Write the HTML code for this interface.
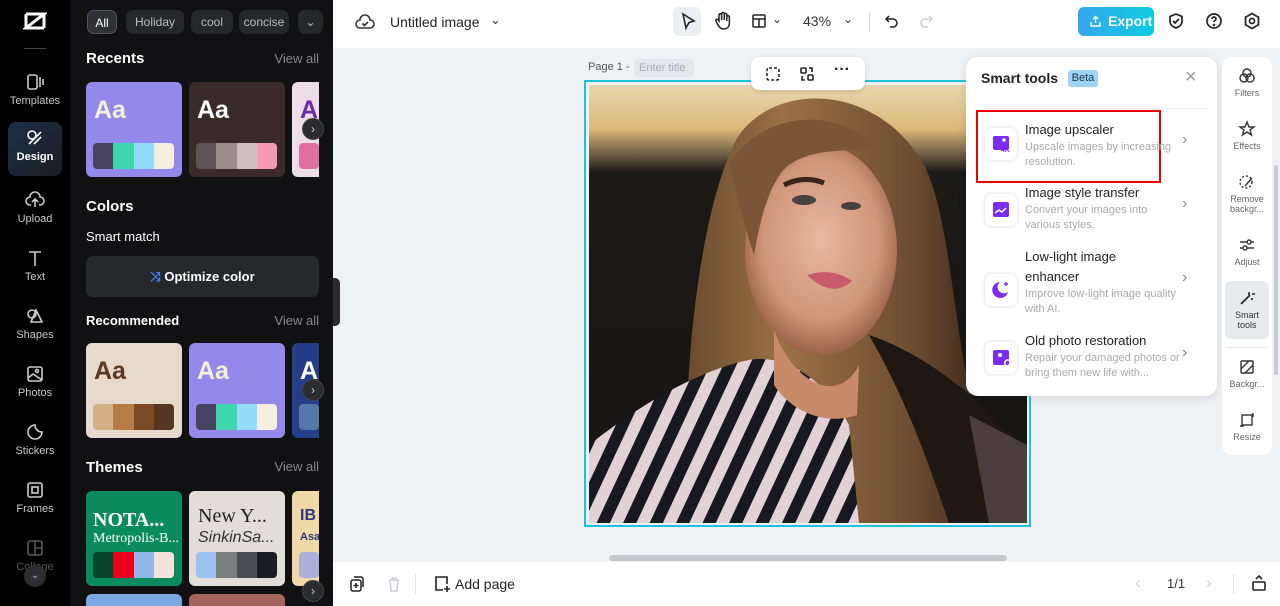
<!DOCTYPE html>
<html><head><meta charset="utf-8"><style>
*{box-sizing:border-box;margin:0;padding:0}
body{width:1280px;height:606px;overflow:hidden;font-family:"Liberation Sans",sans-serif;background:#eff2f5;position:relative}
.abs{position:absolute}
.rail{left:0;top:0;width:70px;height:606px;background:#000}
.rail .it{position:absolute;left:8px;width:54px;height:54px;text-align:center;color:#c8c8c8;font-size:11px}
.rail .it svg{display:block;margin:6px auto 3px}
.panel{left:70px;top:0;width:263px;height:606px;background:#111113;color:#fff;overflow:hidden}
.chip{position:absolute;top:10px;height:24px;border-radius:7px;background:#26272b;color:#bbb;font-size:12px;line-height:24px;text-align:center}
.h{position:absolute;left:16px;font-weight:bold;font-size:15px}
.va{position:absolute;right:14px;color:#888;font-size:13px}
.card{position:absolute;width:96px;height:95px;border-radius:6px;overflow:hidden}
.card .aa{position:absolute;left:8px;top:14px;font-size:25px;font-weight:bold}
.pal{position:absolute;left:7px;bottom:8px;width:81px;height:26px;border-radius:4px;overflow:hidden;display:flex}
.pal i{flex:1}
.nav{position:absolute;width:22px;height:22px;border-radius:50%;background:#2b2c30;border:1px solid #444;color:#ccc;font-size:12px;line-height:20px;text-align:center}
.top{left:333px;top:0;width:947px;height:48px;background:#fff}
.bot{left:333px;top:562px;width:947px;height:44px;background:#fff}
.st{left:966px;top:57px;width:251px;height:339px;background:#fff;border-radius:12px;box-shadow:0 2px 10px rgba(0,0,0,.12)}
.tool{position:absolute;left:18px;width:200px}
.tool .ic{position:absolute;left:1px;top:0;width:32px;height:32px;border-radius:7px;background:#fff;box-shadow:0 0 4px rgba(0,0,0,.15)}
.tool b{position:absolute;left:41px;font-weight:normal;font-size:13px;color:#222;line-height:20px;width:160px}
.tool span{position:absolute;left:41px;font-size:11px;color:#aaa;line-height:15px;width:160px}
.chev{position:absolute;left:216px;color:#888;font-size:16px}
.rr{left:1222px;top:57px;width:50px;height:398px;background:#fff;border-radius:10px}
.rr .it{position:absolute;left:3px;width:44px;text-align:center;font-size:9px;color:#666;line-height:10px}
.rr .it svg{display:block;margin:0 auto 3px}
</style></head><body>

<div class="abs rail">
 <svg class="abs" style="left:23px;top:11px" width="24" height="20" viewBox="0 0 24 20"><path d="M3 3h18L3 17h18" fill="none" stroke="#fff" stroke-width="3"/><path d="M3 3v14M21 3v14" stroke="#fff" stroke-width="3"/></svg>
 <div class="abs" style="left:24px;top:48px;width:22px;height:1px;background:#444"></div>
 <div class="it" style="top:66px"><svg width="20" height="20" viewBox="0 0 20 20" fill="none" stroke="#ccc" stroke-width="1.6"><rect x="3" y="3" width="9" height="14" rx="2"/><path d="M15 5v10M18 7v6"/></svg>Templates</div>
 <div class="it" style="top:122px;height:54px;background:linear-gradient(135deg,#1b3046,#1b1d22);border-radius:8px;color:#fff;font-weight:bold"><svg width="20" height="20" viewBox="0 0 20 20" fill="none" stroke="#fff" stroke-width="1.6"><circle cx="7" cy="7" r="4"/><path d="M4 16l12-12M9 16l7-7"/></svg>Design</div>
 <div class="it" style="top:184px"><svg width="20" height="20" viewBox="0 0 20 20" fill="none" stroke="#ccc" stroke-width="1.6"><path d="M6 15H5a4 4 0 010-8 5 5 0 0110 0 4 4 0 010 8h-1M10 9v8M7 12l3-3 3 3"/></svg>Upload</div>
 <div class="it" style="top:242px"><svg width="20" height="20" viewBox="0 0 20 20" fill="none" stroke="#ccc" stroke-width="1.6"><path d="M4 4h12M10 4v14"/></svg>Text</div>
 <div class="it" style="top:300px"><svg width="20" height="20" viewBox="0 0 20 20" fill="none" stroke="#ccc" stroke-width="1.6"><circle cx="7" cy="8" r="4"/><path d="M11 4l6 12H6z"/></svg>Shapes</div>
 <div class="it" style="top:358px"><svg width="20" height="20" viewBox="0 0 20 20" fill="none" stroke="#ccc" stroke-width="1.6"><rect x="3" y="3" width="14" height="14" rx="2"/><path d="M3 14l5-4 9 6"/><circle cx="12" cy="7" r="1.5"/></svg>Photos</div>
 <div class="it" style="top:416px"><svg width="20" height="20" viewBox="0 0 20 20" fill="none" stroke="#ccc" stroke-width="1.6"><path d="M10 3a7 7 0 107 7c-4 0-7-3-7-7z"/></svg>Stickers</div>
 <div class="it" style="top:474px"><svg width="20" height="20" viewBox="0 0 20 20" fill="none" stroke="#ccc" stroke-width="1.6"><rect x="3" y="3" width="14" height="14" rx="2"/><rect x="7" y="7" width="6" height="6"/></svg>Frames</div>
 <div class="it" style="top:532px;color:#555"><svg width="20" height="20" viewBox="0 0 20 20" fill="none" stroke="#555" stroke-width="1.6"><rect x="3" y="3" width="14" height="14" rx="2"/><path d="M10 3v14M10 10h7"/></svg>Collage</div>
 <div class="abs" style="left:24px;top:565px;width:22px;height:22px;border-radius:50%;background:#2d2e32;color:#bbb;font-size:10px;text-align:center;line-height:22px">⌄</div>
</div>

<div class="abs panel">
 <div class="chip" style="left:17px;width:30px;background:#303136;color:#fff;border:1px solid #555">All</div>
 <div class="chip" style="left:56px;width:58px">Holiday</div>
 <div class="chip" style="left:121px;width:42px">cool</div>
 <div class="chip" style="left:169px;width:50px;overflow:hidden">concise</div>
 <div class="chip" style="left:228px;width:25px">⌄</div>
 <div class="h" style="top:50px">Recents</div><div class="va" style="top:51px">View all</div>
 <div class="card" style="left:16px;top:82px;background:#9488ea"><div class="aa" style="color:#f4efd9">Aa</div><div class="pal"><i style="background:#48435f"></i><i style="background:#3fd6ae"></i><i style="background:#95dcfb"></i><i style="background:#f4f0dd"></i></div></div>
 <div class="card" style="left:119px;top:82px;background:#3a2a2a"><div class="aa" style="color:#fff">Aa</div><div class="pal"><i style="background:#5f5355"></i><i style="background:#9a8c8c"></i><i style="background:#cdbfbf"></i><i style="background:#f49bb3"></i></div></div>
 <div class="card" style="left:222px;top:82px;width:27px;border-radius:6px 0 0 6px;background:#ecdde6"><div class="aa" style="color:#6a2ca8">A</div><div class="pal" style="width:20px"><i style="background:#e070a0"></i></div></div>
 <div class="nav" style="left:232px;top:118px">›</div>
 <div class="h" style="top:198px">Colors</div>
 <div class="abs" style="left:16px;top:229px;font-size:13px">Smart match</div>
 <div class="abs" style="left:16px;top:256px;width:233px;height:41px;border-radius:7px;background:#27282c;text-align:center;line-height:41px;font-weight:bold;font-size:13px"><span style="color:#4a7cf5">⤨</span> Optimize color</div>
 <div class="abs" style="left:16px;top:313px;font-weight:bold;font-size:13px">Recommended</div><div class="va" style="top:313px">View all</div>
 <div class="card" style="left:16px;top:343px;background:#e6dacd"><div class="aa" style="color:#5a3920">Aa</div><div class="pal"><i style="background:#d6b188"></i><i style="background:#b57c47"></i><i style="background:#7b4923"></i><i style="background:#553620"></i></div></div>
 <div class="card" style="left:119px;top:343px;background:#9488ea"><div class="aa" style="color:#f4efd9">Aa</div><div class="pal"><i style="background:#48435f"></i><i style="background:#3fd6ae"></i><i style="background:#95dcfb"></i><i style="background:#f4f0dd"></i></div></div>
 <div class="card" style="left:222px;top:343px;width:27px;border-radius:6px 0 0 6px;background:#243e8a"><div class="aa" style="color:#fff">A</div><div class="pal" style="width:20px"><i style="background:#5577aa"></i></div></div>
 <div class="nav" style="left:232px;top:379px">›</div>
 <div class="h" style="top:459px">Themes</div><div class="va" style="top:459px">View all</div>
 <div class="card" style="left:16px;top:491px;background:#0a8b5e"><div class="abs" style="left:7px;top:18px;font-family:'Liberation Serif',serif;font-weight:bold;font-size:20px;color:#fff">NOTA...</div><div class="abs" style="left:7px;top:40px;font-family:'Liberation Serif',serif;font-size:14px;color:#fff">Metropolis-B...</div><div class="pal"><i style="background:#06442a"></i><i style="background:#e8001c"></i><i style="background:#91b6ea"></i><i style="background:#f4e4da"></i></div></div>
 <div class="card" style="left:119px;top:491px;background:#e2ddd7"><div class="abs" style="left:9px;top:14px;font-family:'Liberation Serif',serif;font-size:20px;color:#222">New Y...</div><div class="abs" style="left:9px;top:38px;font-style:italic;font-size:16px;color:#333">SinkinSa...</div><div class="pal"><i style="background:#9cc3ef"></i><i style="background:#7b7e80"></i><i style="background:#4a4d52"></i><i style="background:#1a1d22"></i></div></div>
 <div class="card" style="left:222px;top:491px;width:27px;border-radius:6px 0 0 6px;background:#efd9a8"><div class="abs" style="left:8px;top:16px;font-weight:bold;font-size:16px;color:#2c3a7a">IB</div><div class="abs" style="left:8px;top:40px;font-weight:bold;font-size:11px;color:#2c3a7a">Asa</div><div class="pal" style="width:20px"><i style="background:#aab0d8"></i></div></div>
 <div class="nav" style="left:232px;top:580px">›</div>
 <div class="card" style="left:16px;top:594px;background:#7ba7df;height:20px"></div>
 <div class="card" style="left:119px;top:594px;background:#a46560;height:20px"></div>
</div>
<div class="abs" style="left:333px;top:278px;width:7px;height:48px;background:#2a2a2e;border-radius:0 5px 5px 0"></div>

<div class="abs top">
 <svg class="abs" style="left:22px;top:12px" width="20" height="20" viewBox="0 0 20 20" fill="none" stroke="#333" stroke-width="1.6"><path d="M6 16H5a4 4 0 010-8 5 5 0 0110 0 4 4 0 010 8H6z"/><path d="M7.5 11.5l2 2 3.5-3.5"/></svg>
 <div class="abs" style="left:57px;top:14px;font-size:14px;color:#222">Untitled image</div>
 <div class="abs" style="left:157px;top:12px;font-size:13px;color:#333">⌄</div>
 <div class="abs" style="left:340px;top:7px;width:28px;height:29px;border-radius:6px;background:#eceef2"></div>
 <svg class="abs" style="left:346px;top:12px" width="18" height="18" viewBox="0 0 18 18" fill="none" stroke="#222" stroke-width="1.6"><path d="M4 2l11 7-5 1.5L7 16z"/></svg>
 <svg class="abs" style="left:381px;top:11px" width="18" height="20" viewBox="0 0 18 20" fill="none" stroke="#222" stroke-width="1.5"><path d="M5 10V4a1.3 1.3 0 012.6 0v5V2.8a1.3 1.3 0 012.6 0V9V3.8a1.3 1.3 0 012.6 0V10V6a1.3 1.3 0 012.6 0v6c0 4-2.5 6-6 6-3 0-4.5-2-6-5l-1.5-3a1.3 1.3 0 012.2-1.3z"/></svg>
 <svg class="abs" style="left:418px;top:13px" width="16" height="16" viewBox="0 0 16 16" fill="none" stroke="#222" stroke-width="1.5"><rect x="2" y="2" width="12" height="12" rx="1"/><path d="M2 6h12M8 6v8"/></svg>
 <div class="abs" style="left:439px;top:12px;font-size:12px;color:#333">⌄</div>
 <div class="abs" style="left:470px;top:13px;font-size:14px;color:#333">43%</div>
 <div class="abs" style="left:510px;top:12px;font-size:12px;color:#333">⌄</div>
 <div class="abs" style="left:536px;top:12px;width:1px;height:20px;background:#ddd"></div>
 <svg class="abs" style="left:551px;top:13px" width="16" height="16" viewBox="0 0 16 16" fill="none" stroke="#222" stroke-width="1.5"><path d="M5 3L2 6l3 3M2 6h7a4 4 0 010 8H6"/></svg>
 <svg class="abs" style="left:585px;top:13px" width="16" height="16" viewBox="0 0 16 16" fill="none" stroke="#ccd" stroke-width="1.5"><path d="M11 3l3 3-3 3M14 6H7a4 4 0 000 8h3"/></svg>
 <div class="abs" style="left:745px;top:7px;width:76px;height:29px;border-radius:6px;background:linear-gradient(90deg,#37a5f0,#0ccde0);color:#fff;font-weight:bold;font-size:14px;line-height:29px;padding-left:30px">Export</div>
 <svg class="abs" style="left:756px;top:15px" width="13" height="13" viewBox="0 0 13 13" fill="none" stroke="#fff" stroke-width="1.4"><path d="M6.5 8V1.5M4 4l2.5-2.5L9 4M2 7v4h9V7"/></svg>
 <svg class="abs" style="left:834px;top:12px" width="18" height="18" viewBox="0 0 18 18" fill="none" stroke="#222" stroke-width="1.7"><path d="M9 2l6 2.5v4.5c0 3.5-2.5 6-6 7-3.5-1-6-3.5-6-7V4.5z"/><path d="M6 9l2 2 4-4"/></svg>
 <svg class="abs" style="left:872px;top:12px" width="18" height="18" viewBox="0 0 18 18" fill="none" stroke="#222" stroke-width="1.7"><circle cx="9" cy="9" r="7"/><path d="M7 7a2 2 0 114 0c0 1.5-2 1.5-2 3"/><circle cx="9" cy="13" r=".5"/></svg>
 <svg class="abs" style="left:910px;top:12px" width="18" height="18" viewBox="0 0 18 18" fill="none" stroke="#222" stroke-width="1.7"><path d="M9 1.5l6.5 3.75v7.5L9 16.5l-6.5-3.75v-7.5z"/><circle cx="9" cy="9" r="2.5"/></svg>
</div>

<div class="abs" style="left:588px;top:61px;font-size:11px;color:#555">Page 1 -</div>
<div class="abs" style="left:634px;top:59px;width:60px;height:18px;border-radius:3px;background:#e3e7ec;font-size:11px;color:#aab;line-height:18px;padding-left:5px">Enter title</div>

<div class="abs" style="left:584px;top:80px;width:447px;height:447px;border:2px solid #1ec2dc"></div>
<svg class="abs" style="left:589px;top:85px" width="438" height="438" viewBox="0 0 438 438">
 <defs>
  <linearGradient id="sky" x1="0" y1="0" x2="0" y2="1"><stop offset="0" stop-color="#e8d6ae"/><stop offset=".1" stop-color="#dcb978"/><stop offset=".16" stop-color="#6a5a44"/><stop offset=".2" stop-color="#1c1a17"/><stop offset="1" stop-color="#161412"/></linearGradient>
  <radialGradient id="face" cx=".5" cy=".45" r=".55"><stop offset="0" stop-color="#e8b8a0"/><stop offset=".7" stop-color="#cf957a"/><stop offset="1" stop-color="#9a6248"/></radialGradient>
  <linearGradient id="hair" x1="0" y1="0" x2="1" y2="0"><stop offset="0" stop-color="#6b4a2c"/><stop offset=".3" stop-color="#9a7148"/><stop offset=".7" stop-color="#6e4c30"/><stop offset="1" stop-color="#2a1c12"/></linearGradient>
  <pattern id="str" width="24" height="24" patternUnits="userSpaceOnUse" patternTransform="rotate(25)"><rect width="24" height="24" fill="#e2d2d6"/><rect width="12" height="24" fill="#181820"/></pattern>
 </defs>
 <rect width="438" height="438" fill="url(#sky)"/>
 <path d="M100 440 C90 300 110 120 150 50 C190 -5 290 0 335 80 C370 150 360 300 420 440Z" fill="url(#hair)"/>
 <path d="M0 438 L0 360 C50 320 110 285 160 275 C200 268 240 300 260 340 L270 438Z" fill="url(#str)"/>
 <path d="M240 330 C250 360 255 400 260 438 L200 438Z" fill="url(#str)"/>
 <path d="M280 250 C320 320 340 380 360 438 L438 438 L438 370 C400 320 340 270 280 250Z" fill="#1e1712"/>
 <path d="M380 330 L438 360 L438 438 L400 438Z" fill="#6a5660" opacity=".6"/>
 <ellipse cx="232" cy="165" rx="76" ry="105" fill="url(#face)"/>
 <path d="M185 245 C205 300 250 320 270 280 L268 330 C240 340 205 330 185 300Z" fill="#c98a6c"/>
 <path d="M140 80 C165 35 235 15 285 60 C260 70 230 60 200 80 C180 95 170 140 165 170 C155 140 148 110 140 80Z" fill="#7a5636"/>
 <path d="M195 100 q20 -10 40 -2" stroke="#3a2418" stroke-width="5" fill="none"/>
 <ellipse cx="215" cy="115" rx="12" ry="5" fill="#4a4040"/>
 <ellipse cx="262" cy="121" rx="10" ry="4" fill="#4a4040"/>
 <path d="M218 190 q25 -8 45 6 q-20 18 -45 -6z" fill="#c85a6a"/>
</svg>

<div class="abs" style="left:751px;top:57px;width:114px;height:33px;border-radius:8px;background:#fff;box-shadow:0 1px 5px rgba(0,0,0,.15)">
 <svg class="abs" style="left:14px;top:9px" width="16" height="16" viewBox="0 0 16 16" fill="none" stroke="#222" stroke-width="1.6" stroke-dasharray="3 2"><rect x="2" y="2" width="12" height="12" rx="2"/></svg>
 <svg class="abs" style="left:48px;top:9px" width="16" height="16" viewBox="0 0 16 16" fill="none" stroke="#222" stroke-width="1.6"><rect x="2" y="2" width="5" height="5" rx="1"/><rect x="9" y="9" width="5" height="5" rx="1"/><path d="M10 2h3v4M6 14H3v-4"/></svg>
 <div class="abs" style="left:83px;top:4px;font-size:16px;color:#222;font-weight:bold">···</div>
</div>

<div class="abs st">
 <div class="abs" style="left:15px;top:13px;font-weight:bold;font-size:14px;color:#222">Smart tools</div>
 <div class="abs" style="left:102px;top:13px;width:30px;height:17px;border-radius:3px;background:#9fd4f8;font-size:11px;color:#234;line-height:17px;text-align:center">Beta</div>
 <div class="abs" style="left:219px;top:9px;font-size:20px;color:#999">×</div>
 <div class="abs" style="left:20px;top:51px;width:222px;height:1px;background:#eee"></div>
 <div class="abs" style="left:10px;top:53px;width:185px;height:73px;border:2px solid #e00"></div>
 <div class="tool" style="top:63px"><div class="ic" style="top:8px"><svg width="32" height="32" viewBox="0 0 32 32"><rect x="8" y="8" width="16" height="14" rx="2" fill="#7c2cf0"/><circle cx="19" cy="12" r="1.8" fill="#fff"/><text x="16" y="24" font-size="7" font-weight="bold" fill="#7c2cf0" font-family="Liberation Sans">4K</text></svg></div><b style="top:0">Image upscaler</b><span style="top:20px">Upscale images by increasing resolution.</span></div>
 <div class="chev" style="top:74px">›</div>
 <div class="tool" style="top:126px"><div class="ic" style="top:11px"><svg width="32" height="32" viewBox="0 0 32 32"><rect x="8" y="8" width="16" height="15" rx="2" fill="#7c2cf0"/><path d="M10 19l4-3 3 2 4-4" stroke="#fff" stroke-width="1.5" fill="none"/></svg></div><b style="top:0">Image style transfer</b><span style="top:20px">Convert your images into various styles.</span></div>
 <div class="chev" style="top:138px">›</div>
 <div class="tool" style="top:190px"><div class="ic" style="top:27px"><svg width="32" height="32" viewBox="0 0 32 32"><path d="M15 8a8 8 0 108 10 6 6 0 01-8-10z" fill="#7c2cf0"/><path d="M21 8v4M19 10h4" stroke="#7c2cf0" stroke-width="1.5"/></svg></div><b style="top:0;line-height:20px">Low-light image<br>enhancer</b><span style="top:40px">Improve low-light image quality with AI.</span></div>
 <div class="chev" style="top:212px">›</div>
 <div class="tool" style="top:274px"><div class="ic" style="top:11px"><svg width="32" height="32" viewBox="0 0 32 32"><rect x="8" y="8" width="16" height="15" rx="2" fill="#7c2cf0"/><circle cx="15" cy="13" r="2" fill="#fff"/><path d="M25 19a3 3 0 10 0 4" stroke="#fff" stroke-width="1.5" fill="none"/></svg></div><b style="top:0">Old photo restoration</b><span style="top:20px">Repair your damaged photos or bring them new life with...</span></div>
 <div class="chev" style="top:287px">›</div>
</div>

<div class="abs rr">
 <div class="it" style="top:10px"><svg width="18" height="18" viewBox="0 0 18 18" fill="none" stroke="#333" stroke-width="1.4"><circle cx="9" cy="6" r="4"/><circle cx="6" cy="11" r="4"/><circle cx="12" cy="11" r="4"/></svg>Filters</div>
 <div class="it" style="top:63px"><svg width="18" height="18" viewBox="0 0 18 18" fill="none" stroke="#333" stroke-width="1.4"><path d="M9 2l2 5h5l-4 3 1.5 5L9 12l-4.5 3L6 10 2 7h5z"/></svg>Effects</div>
 <div class="it" style="top:116px"><svg width="18" height="18" viewBox="0 0 18 18" fill="none" stroke="#333" stroke-width="1.4"><circle cx="8" cy="9" r="6" stroke-dasharray="2 2"/><path d="M7 13l7-8"/></svg>Remove<br>backgr...</div>
 <div class="it" style="top:179px"><svg width="18" height="18" viewBox="0 0 18 18" fill="none" stroke="#333" stroke-width="1.4"><path d="M2 6h14M2 12h14"/><circle cx="11" cy="6" r="2" fill="#fff"/><circle cx="7" cy="12" r="2" fill="#fff"/></svg>Adjust</div>
 <div class="abs" style="left:3px;top:224px;width:44px;height:58px;border-radius:6px;background:#e8eaee"></div>
 <div class="it" style="top:232px;color:#333"><svg width="18" height="18" viewBox="0 0 18 18" fill="none" stroke="#222" stroke-width="1.6"><path d="M3 15l9-9M11 3v3M14 5h3M14 9v2"/></svg>Smart<br>tools</div>
 <div class="abs" style="left:5px;top:290px;width:40px;height:1px;background:#e5e5e5"></div>
 <div class="it" style="top:301px"><svg width="18" height="18" viewBox="0 0 18 18" fill="none" stroke="#333" stroke-width="1.4"><rect x="3" y="3" width="12" height="12" rx="1"/><path d="M3 11l8-8M7 15l8-8"/></svg>Backgr...</div>
 <div class="it" style="top:354px"><svg width="18" height="18" viewBox="0 0 18 18" fill="none" stroke="#333" stroke-width="1.4"><rect x="4" y="4" width="10" height="10"/><path d="M15 2v4M2 15h4"/></svg>Resize</div>
</div>
<div class="abs" style="left:1274px;top:165px;width:4px;height:210px;border-radius:2px;background:#c8ccd2"></div>

<div class="abs" style="left:609px;top:555px;width:398px;height:6px;border-radius:3px;background:#c3c6ca"></div>
<div class="abs bot">
 <svg class="abs" style="left:16px;top:13px" width="16" height="18" viewBox="0 0 16 18" fill="none" stroke="#222" stroke-width="1.5"><rect x="2" y="5" width="10" height="11" rx="2"/><path d="M5 2h7a2 2 0 012 2v8M7 8v5M4.5 10.5h5"/></svg>
 <svg class="abs" style="left:54px;top:13px" width="14" height="18" viewBox="0 0 14 18" fill="none" stroke="#ccd" stroke-width="1.5"><path d="M2 5h10M5 5V3h4v2M3 5l1 11h6l1-11"/></svg>
 <div class="abs" style="left:82px;top:12px;width:1px;height:20px;background:#e3e3e3"></div>
 <svg class="abs" style="left:100px;top:12px" width="18" height="20" viewBox="0 0 18 20" fill="none" stroke="#222" stroke-width="1.6"><path d="M10 16H3V3h11v7M14 12v6M11 15h6"/></svg>
 <div class="abs" style="left:122px;top:14px;font-size:14px;color:#222">Add page</div>
 <div class="abs" style="left:802px;top:11px;font-size:17px;color:#ccc">‹</div>
 <div class="abs" style="left:834px;top:14px;font-size:13px;color:#333">1/1</div>
 <div class="abs" style="left:873px;top:11px;font-size:17px;color:#ccc">›</div>
 <div class="abs" style="left:900px;top:12px;width:1px;height:20px;background:#e3e3e3"></div>
 <svg class="abs" style="left:918px;top:12px" width="16" height="18" viewBox="0 0 16 18" fill="none" stroke="#222" stroke-width="1.6"><rect x="2" y="8" width="12" height="8" rx="1"/><path d="M5 5l3-3 3 3"/></svg>
</div>
</body></html>
